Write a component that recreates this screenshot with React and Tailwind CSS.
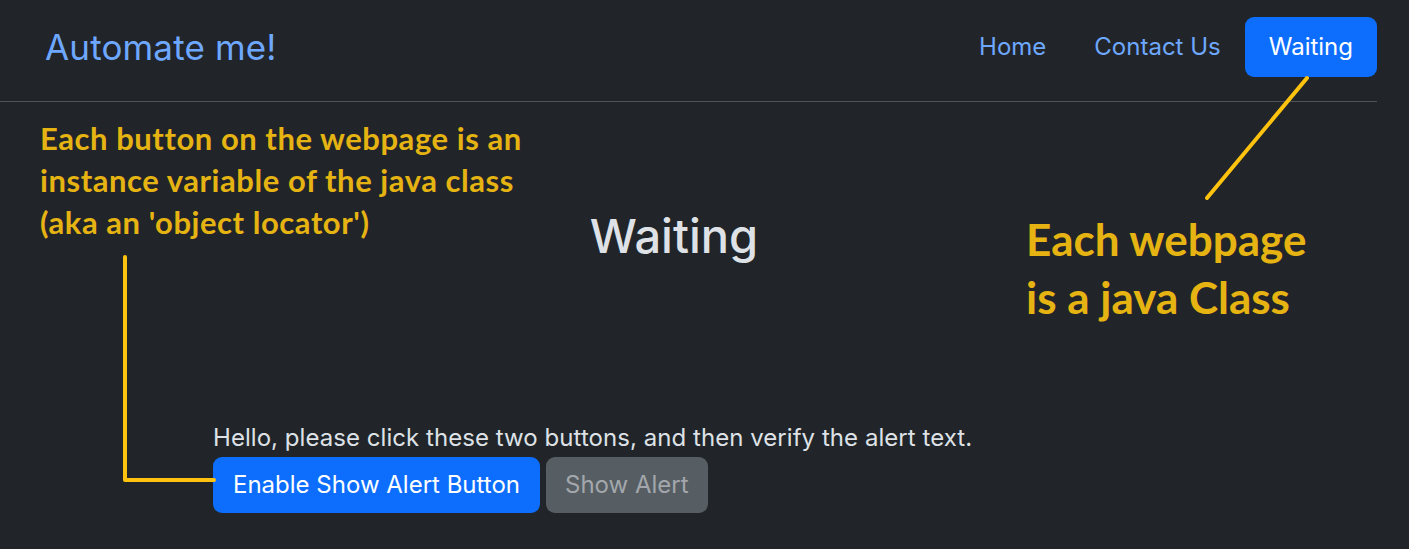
export default function App() {
  return (
    <div className="relative w-[1409px] h-[549px] overflow-hidden bg-[#212529] text-[#dee2e6] font-['Inter','Liberation_Sans',sans-serif]">
      {/* Navbar */}
      <nav className="w-[1377px] h-[102px] border-b border-[#4f5357] flex items-start justify-between pt-[17px] pl-[45px]">
        <a className="text-[35px] leading-[60px] text-[#6ea8fe] tracking-[0.15px]">Automate me!</a>
        <div className="flex items-center">
          <a className="px-6 py-3 text-[24px] leading-[36px] text-[#6ea8fe]">Home</a>
          <a className="px-6 py-3 text-[24px] leading-[36px] text-[#6ea8fe]">Contact Us</a>
          <a className="px-6 py-3 text-[24px] leading-[36px] text-white bg-[#0d6efd] rounded-[9px]">Waiting</a>
        </div>
      </nav>

      {/* Page */}
      <div className="w-[1348px] mt-[105px] text-center">
        <h1 className="text-[47px] leading-[58px] font-medium">Waiting</h1>
      </div>
      <div className="pl-[213px] mt-[155px]">
        <p className="text-[24px] leading-[36px] tracking-[0.05px]">Hello, please click these two buttons, and then verify the alert text.</p>
        <div className="flex gap-[6px] mt-px">
          <button className="h-[56px] px-[20px] rounded-[9px] bg-[#0d6efd] text-white text-[24px] leading-[36px]">Enable Show Alert Button</button>
          <button disabled className="h-[56px] px-[19px] rounded-[9px] bg-[#565e64] text-[#a3a7ab] text-[24px] leading-[36px]">Show Alert</button>
        </div>
      </div>

      {/* Annotations */}
      <svg className="absolute inset-0 pointer-events-none" width="1409" height="549">
        <polyline points="125,257 125,480 214,480" fill="none" stroke="#ffc20e" strokeWidth="4" strokeLinecap="round" strokeLinejoin="round" />
        <line x1="1307" y1="78" x2="1207" y2="198" stroke="#ffc20e" strokeWidth="4" strokeLinecap="round" />
      </svg>
      <div className="absolute left-[40px] top-[117px] text-[#e6b412] font-['Lato',sans-serif] font-bold text-[31px] leading-[42px] tracking-[0.55px]">
        <p>Each button on the webpage is an</p>
        <p>instance variable of the java class</p>
        <p>(aka an 'object locator')</p>
      </div>
      <div className="absolute left-[1026px] top-[210px] text-[#e6b412] font-['Lato',sans-serif] font-bold text-[44px] leading-[58px]">
        <p>Each webpage</p>
        <p>is a java Class</p>
      </div>
    </div>
  );
}
